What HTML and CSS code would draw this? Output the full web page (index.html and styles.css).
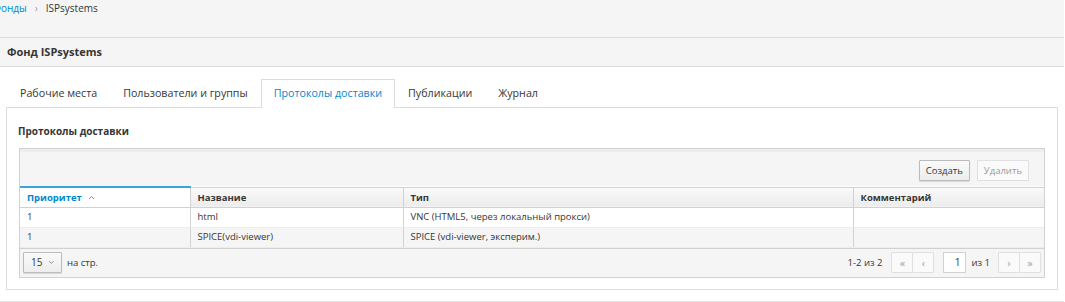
FILE: index.html
```html
<!DOCTYPE html>
<html lang="ru">
<head>
<meta charset="utf-8">
<link rel="stylesheet" href="styles.css">
</head>
<body>
<div class="top">
  <div class="crumbs">
    <a class="crumb-link" href="#">Фонды</a>
    <span class="crumb-sep">›</span>
    <span class="crumb-cur">ISPsystems</span>
  </div>
  <div class="titlebar">Фонд ISPsystems</div>
</div>
<div class="content">
  <ul class="tabs">
    <li class="tab">Рабочие места</li>
    <li class="tab">Пользователи и группы</li>
    <li class="tab active">Протоколы доставки</li>
    <li class="tab">Публикации</li>
    <li class="tab">Журнал</li>
  </ul>
  <div class="panel">
    <h3 class="panel-title">Протоколы доставки</h3>
    <div class="grid">
      <div class="toolbar">
        <button class="btn">Создать</button>
        <button class="btn disabled">Удалить</button>
      </div>
      <table class="tbl">
        <colgroup>
          <col class="c1"><col class="c2"><col class="c3"><col class="c4">
        </colgroup>
        <thead>
          <tr>
            <th class="sorted">Приоритет <svg class="caret" width="7" height="5" viewBox="0 0 7 5"><path d="M1 4 L3.5 1.5 L6 4" fill="none" stroke="#39a5dc" stroke-width="1"/></svg></th>
            <th>Название</th>
            <th>Тип</th>
            <th>Комментарий</th>
          </tr>
        </thead>
        <tbody>
          <tr><td>1</td><td>html</td><td>VNC (HTML5, через локальный прокси)</td><td></td></tr>
          <tr class="odd"><td>1</td><td>SPICE(vdi-viewer)</td><td>SPICE (vdi-viewer, эксперим.)</td><td></td></tr>
        </tbody>
      </table>
      <div class="footer">
        <div class="footer-left">
          <button class="btn select"><span>15</span><svg class="chev" width="7" height="5" viewBox="0 0 7 5"><path d="M1 1 L3.5 3.5 L6 1" fill="none" stroke="#8a8a8a" stroke-width="1"/></svg></button>
          <span class="perpage">на стр.</span>
        </div>
        <div class="footer-right">
          <span class="range">1-2 из 2</span>
          <div class="btn-group">
            <button class="btn pg">«</button><button class="btn pg">‹</button>
          </div>
          <span class="page-input">1</span>
          <span class="of">из 1</span>
          <div class="btn-group">
            <button class="btn pg">›</button><button class="btn pg">»</button>
          </div>
        </div>
      </div>
    </div>
  </div>
  <div class="next-section"></div>
</div>
</body>
</html>
```

FILE: styles.css
```css
* { box-sizing: border-box; }
html, body { margin: 0; padding: 0; }
body {
  width: 1065px;
  height: 302px;
  overflow: hidden;
  background: #fff;
  font-family: "Open Sans", "Noto Sans", sans-serif;
  font-size: 12px;
  color: #363636;
}
.top {
  background: #f5f5f5;
  width: 1064px;
}
.crumbs {
  height: 38px;
  border-bottom: 1px solid #dcdcdc;
  display: flex;
  align-items: flex-start;
  margin-left: -7px;
  gap: 8px;
  font-size: 10px;
  line-height: 17px;
}
.crumb-link { color: #0088ce; text-decoration: none; }
.crumb-sep { color: #9c9c9c; font-size: 10px; }
.crumb-cur { color: #363636; }
.titlebar {
  height: 29px;
  border-bottom: 1px solid #dcdcdc;
  padding-left: 7px;
  font-weight: 700;
  font-size: 11px;
  line-height: 28px;
}
.content {
  padding: 12px 7px 0 6px;
  width: 1064px;
}
.tabs {
  list-style: none;
  margin: 0;
  padding: 0 0 0 1px;
  display: flex;
  height: 28px;
  font-size: 10.7px;
}
.tab {
  padding: 0 12px;
  line-height: 27px;
  border: 1px solid transparent;
  border-bottom: none;
  color: #363636;
}
.tab.active {
  color: #0088ce;
  border-color: #dcdcdc;
  background: #fff;
  position: relative;
  z-index: 1;
  margin-bottom: -1px;
  height: 29px;
}
.panel {
  border: 1px solid #dcdcdc;
  padding: 0 12px 12px 12px;
  width: 1052px;
  height: 183px;
}
.panel-title {
  margin: 0 0 0 -1px;
  font-size: 10px;
  font-weight: 700;
  line-height: 17px;
  padding: 15px 0 8px 0;
  color: #363636;
}
.grid {
  border: 1px solid #d1d1d1;
  width: 1026px;
}
.toolbar {
  background: #f5f5f5;
  height: 37px;
  border-top: 3px solid #ededed;
  display: flex;
  justify-content: flex-end;
  align-items: center;
  gap: 7px;
  padding: 2px 15px 0 0;
}
.btn {
  font-family: inherit;
  font-size: 9.5px;
  color: #363636;
  border: 1px solid #bbb;
  background: linear-gradient(#fafafa, #ededed);
  border-radius: 1px;
  height: 21px;
  padding: 0 6px;
  line-height: 19px;
  box-shadow: 0 1px 1px rgba(0,0,0,0.12);
  cursor: default;
}
.btn.disabled {
  color: #9a9a9a;
  background: #fafafa;
  border-color: #e0e0e0;
  box-shadow: none;
}
.tbl {
  width: 100%;
  border-collapse: collapse;
  table-layout: fixed;
}
.c1 { width: 170px; }
.c2 { width: 213px; }
.c3 { width: 450px; }
.c4 { width: auto; }
.tbl th {
  text-align: left;
  font-weight: 700;
  font-size: 9.5px;
  height: 20px;
  padding: 0 7px;
  color: #363636;
  background: linear-gradient(#fafafa, #ececec);
  border: 1px solid #d1d1d1;
  border-left: none;
  line-height: 17px;
}
.tbl th:last-child { border-right: none; }
.tbl th.sorted {
  color: #0088ce;
  background: #fff;
  border-top: 2px solid #39a5dc;
}
.caret { margin-left: 4px; vertical-align: 1px; }
.tbl td {
  height: 20px;
  padding: 0 7px;
  font-size: 9.5px;
  color: #363636;
  border-right: 1px solid #d1d1d1;
  border-bottom: 1px solid #ededed;
  line-height: 18px;
}
.tbl td:last-child { border-right: none; }
.tbl tr.odd td { background: #f5f5f5; }
.footer {
  background: #f5f5f5;
  border-top: 1px solid #d1d1d1;
  height: 29px;
  display: flex;
  justify-content: space-between;
  align-items: center;
  padding: 0 3px;
  font-size: 9.5px;
}
.footer-left, .footer-right {
  display: flex;
  align-items: center;
}
.select {
  width: 39px;
  display: flex;
  align-items: center;
  padding-left: 7px;
  font-size: 10px;
}
.chev { margin-left: 6px; }
.perpage { margin-left: 5px; }
.range { margin-right: 9px; }
.btn-group { display: flex; }
.pg {
  width: 22px;
  color: #a0a0a0;
  padding: 0;
  text-align: center;
  box-shadow: none;
  background: #fafafa;
  border-color: #e0e0e0;
  font-size: 11px;
}
.pg + .pg { margin-left: -1px; }
.page-input {
  display: inline-block;
  width: 23px;
  height: 21px;
  border: 1px solid #d1d1d1;
  background: #fff;
  text-align: right;
  padding-right: 5px;
  line-height: 19px;
  margin-left: 9px;
  font-size: 10px;
}
.of { margin: 0 8px 0 5px; }
.next-section {
  margin: 11px -7px 0 -6px;
  border-top: 1px solid #e5e5e5;
  height: 2px;
}
```
